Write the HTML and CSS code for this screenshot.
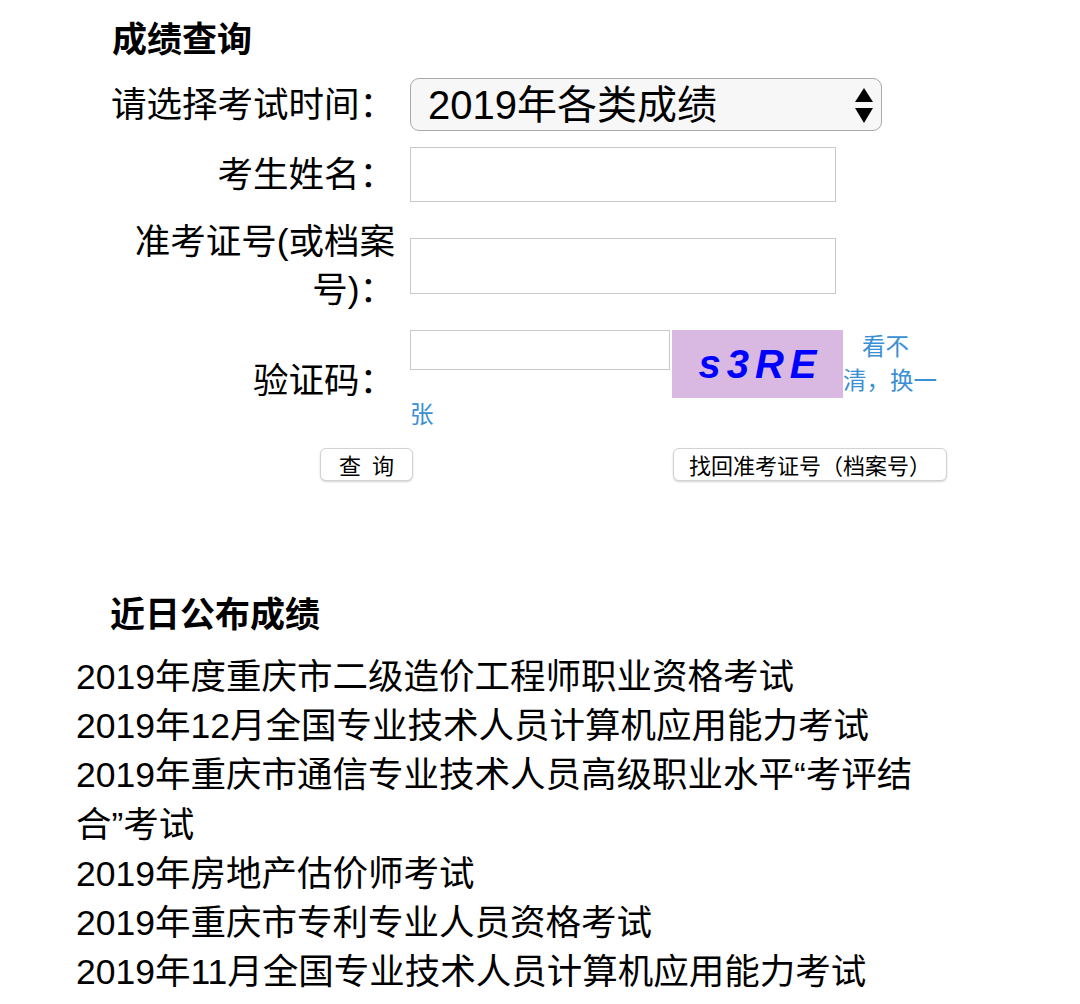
FILE: index.html
```html
<!DOCTYPE html>
<html lang="zh-CN">
<head>
<meta charset="utf-8">
<title>成绩查询</title>
<link rel="stylesheet" href="styles.css">
</head>
<body>
<div class="page">
  <h2 class="section-title query-title">成绩查询</h2>
  <form class="query-form">
    <label class="field-label" for="exam">请选择考试时间：</label>
    <div class="field">
      <div class="select-wrap">
        <select id="exam" class="select"><option>2019年各类成绩</option></select>
        <svg class="select-arrows" width="18" height="35" viewBox="0 0 18 35" aria-hidden="true"><path d="M9 0 L18 14 L0 14 Z"/><path d="M0 20 L18 20 L9 35 Z"/></svg>
      </div>
    </div>

    <label class="field-label" for="name">考生姓名：</label>
    <div class="field"><input id="name" class="text-input wide" type="text"></div>

    <label class="field-label" for="num">准考证号(或档案号)：</label>
    <div class="field"><input id="num" class="text-input wide tall" type="text"></div>

    <label class="field-label" for="code">验证码：</label>
    <div class="field captcha-field">
      <input id="code" class="text-input short" type="text">
      <span class="captcha">s3RE</span>
      <a class="refresh" href="#">看不清，换一张</a>
    </div>

    <div class="actions">
      <button type="button" class="btn btn-query">查&ensp;询</button>
      <button type="button" class="btn">找回准考证号（档案号）</button>
    </div>
  </form>

  <h2 class="section-title recent-title">近日公布成绩</h2>
  <ul class="recent-list">
    <li>2019年度重庆市二级造价工程师职业资格考试</li>
    <li>2019年12月全国专业技术人员计算机应用能力考试</li>
    <li>2019年重庆市通信专业技术人员高级职业水平“考评结合”考试</li>
    <li>2019年房地产估价师考试</li>
    <li>2019年重庆市专利专业人员资格考试</li>
    <li>2019年11月全国专业技术人员计算机应用能力考试</li>
  </ul>
</div>
</body>
</html>
```

FILE: styles.css
```css
* {
  box-sizing: border-box;
}

html, body {
  margin: 0;
  padding: 0;
  background: #ffffff;
}

body {
  font-family: "Liberation Sans", "Noto Sans CJK SC", sans-serif;
  color: #000000;
}

.page {
  padding-top: 15px;
  width: 1080px;
  height: 1004px;
  overflow: hidden;
}

.section-title {
  margin: 0 0 0 110px;
  font-family: "Noto Sans CJK SC", sans-serif;
  font-size: 35px;
  line-height: 44px;
  font-weight: 700;
}

.query-title {
  margin-left: 112px;
}

.query-form {
  margin: 19px 0 0 110px;
  display: grid;
  grid-template-columns: 285px 537px;
  column-gap: 15px;
  row-gap: 16px;
  align-items: center;
}

.field-label {
  font-size: 35.5px;
  line-height: 48px;
  text-align: right;
}

.select-wrap {
  position: relative;
  width: 472px;
  height: 53px;
}

.select {
  -webkit-appearance: none;
  appearance: none;
  width: 100%;
  height: 100%;
  margin: 0;
  padding: 0 0 0 17px;
  border: 1.5px solid #a9a9a9;
  border-radius: 9px;
  background: #f7f7f7;
  font-family: "Liberation Sans", "Noto Sans CJK SC", sans-serif;
  font-size: 40px;
  color: #000;
  line-height: 50px;
}

.select-arrows {
  position: absolute;
  right: 9px;
  top: 10px;
  fill: #000;
  pointer-events: none;
}

.text-input {
  display: block;
  margin: 0;
  padding: 0 8px;
  border: 1.5px solid #c9c9c9;
  background: #fff;
  font-size: 24px;
  font-family: "Liberation Sans", "Noto Sans CJK SC", sans-serif;
}

.text-input.wide {
  width: 426px;
  height: 55px;
}

.text-input.tall {
  height: 56px;
}

.captcha-field {
  display: flow-root;
  font-size: 23.5px;
  line-height: 34px;
}

.text-input.short {
  float: left;
  width: 260px;
  height: 40px;
}

.captcha {
  float: left;
  display: block;
  width: 171px;
  height: 68px;
  margin-left: 2px;
  padding-left: 6px;
  background: #d9b8e2;
  color: #0000ff;
  font-family: "Liberation Sans", Arial, sans-serif;
  font-size: 40px;
  font-weight: 700;
  font-style: italic;
  letter-spacing: 6px;
  line-height: 68px;
  text-align: center;
}

.refresh {
  margin-left: 19px;
  color: #3b8fd4;
  text-decoration: none;
}

.actions {
  grid-column: 1 / -1;
  display: flex;
  justify-content: space-between;
  padding-left: 210px;
}

.btn {
  height: 33px;
  margin: 0;
  padding: 0 15px;
  border: 1px solid #d2d2d2;
  border-radius: 6px;
  background: #ffffff;
  box-shadow: 0 1px 2px rgba(0, 0, 0, 0.18);
  font-family: "Noto Sans CJK SC", sans-serif;
  font-size: 22px;
  line-height: 31px;
  color: #000;
}

.btn-query {
  padding: 0 18px;
}

.recent-title {
  margin-top: 109px;
}

.recent-list {
  list-style: none;
  margin: 19px 0 0 0;
  padding: 0 0 0 76px;
  width: 936px;
  font-size: 35.5px;
  line-height: 49.2px;
}

.recent-list li {
  margin: 0;
}
```
